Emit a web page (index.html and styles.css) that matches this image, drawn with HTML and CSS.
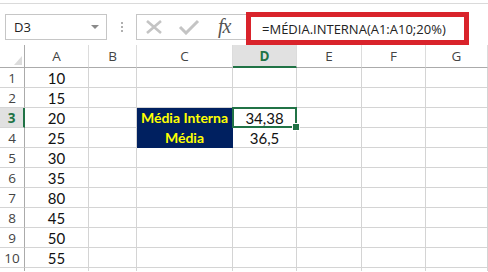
FILE: index.html
```html
<!DOCTYPE html>
<html lang="pt">
<head>
  <meta charset="UTF-8" />
  <title>MÉDIA.INTERNA</title>
  <link rel="stylesheet" href="styles.css">
</head>
<body>

<div class="toolbar">
  <div class="namebox">
    <span>D3</span>
    <span class="caret"></span>
  </div>
  <div class="dots"><i></i><i></i><i></i></div>
  <div class="fxbox">
    <svg class="ico" width="20" height="16" viewBox="0 0 20 16">
      <path d="M3 2 L17 14 M17 2 L3 14" stroke="#c4c4c4" stroke-width="2.6" fill="none"/>
    </svg>
    <svg class="ico" width="22" height="16" viewBox="0 0 22 16">
      <path d="M2 8 L8 14 L20 2" stroke="#c4c4c4" stroke-width="3" fill="none"/>
    </svg>
    <span class="fx">fx</span>
  </div>
  <div class="formula">
    <span>=MÉDIA.INTERNA(A1:A10;20%)</span>
  </div>
</div>

<div class="sheet">
  <div class="hd corner"><span class="tri"></span></div>
  <div class="hd">A</div>
  <div class="hd">B</div>
  <div class="hd">C</div>
  <div class="hd on">D</div>
  <div class="hd">E</div>
  <div class="hd">F</div>
  <div class="hd">G</div>

  <div class="rh">1</div><div class="c">10</div><div class="c"></div><div class="c"></div><div class="c"></div><div class="c"></div><div class="c"></div><div class="c"></div>
  <div class="rh">2</div><div class="c">15</div><div class="c"></div><div class="c"></div><div class="c"></div><div class="c"></div><div class="c"></div><div class="c"></div>
  <div class="rh on">3</div><div class="c">20</div><div class="c"></div><div class="c lbl">Média Interna</div><div class="c sel">34,38</div><div class="c"></div><div class="c"></div><div class="c"></div>
  <div class="rh">4</div><div class="c">25</div><div class="c"></div><div class="c lbl">Média</div><div class="c">36,5</div><div class="c"></div><div class="c"></div><div class="c"></div>
  <div class="rh">5</div><div class="c">30</div><div class="c"></div><div class="c"></div><div class="c"></div><div class="c"></div><div class="c"></div><div class="c"></div>
  <div class="rh">6</div><div class="c">35</div><div class="c"></div><div class="c"></div><div class="c"></div><div class="c"></div><div class="c"></div><div class="c"></div>
  <div class="rh">7</div><div class="c">80</div><div class="c"></div><div class="c"></div><div class="c"></div><div class="c"></div><div class="c"></div><div class="c"></div>
  <div class="rh">8</div><div class="c">45</div><div class="c"></div><div class="c"></div><div class="c"></div><div class="c"></div><div class="c"></div><div class="c"></div>
  <div class="rh">9</div><div class="c">50</div><div class="c"></div><div class="c"></div><div class="c"></div><div class="c"></div><div class="c"></div><div class="c"></div>
  <div class="rh">10</div><div class="c">55</div><div class="c"></div><div class="c"></div><div class="c"></div><div class="c"></div><div class="c"></div><div class="c"></div>
  <div class="rh end"></div><div class="c end"></div><div class="c end"></div><div class="c end"></div><div class="c end"></div><div class="c end"></div><div class="c end"></div><div class="c end"></div>
</div>

</body>
</html>
```

FILE: styles.css
```css
* { box-sizing: border-box; margin: 0; padding: 0; }

body {
  width: 488px;
  height: 272px;
  overflow: hidden;
  background: #fff;
  font-family: 'Open Sans', 'Noto Sans', sans-serif;
  color: #333;
}

/* Formula bar */
.toolbar {
  margin-top: 3px;
  border-top: 1px solid #dadada;
  height: 42px;
  display: flex;
  align-items: flex-start;
  padding-top: 10px;
}

.namebox {
  margin-left: 5px;
  width: 102px;
  height: 26px;
  border: 1px solid #c6c6c6;
  display: flex;
  align-items: center;
  justify-content: space-between;
  padding: 0 7px 0 8px;
  font-size: 13px;
  color: #222;
}

.caret {
  width: 0;
  height: 0;
  border-left: 4px solid transparent;
  border-right: 4px solid transparent;
  border-top: 4px solid #8a8a8a;
}

.dots {
  width: 3px;
  margin: 8px 12px 0 14px;
  display: flex;
  flex-direction: column;
  gap: 2px;
}
.dots i {
  width: 2px;
  height: 2px;
  background: #b0b0b0;
}

.fxbox {
  width: 110px;
  height: 26px;
  border: 1px solid #c6c6c6;
  border-right: none;
  display: flex;
  align-items: center;
  padding-left: 7px;
}
.ico { margin-right: 14px; }
.ico + .ico { margin-right: 18px; }

.fx {
  font-family: 'Liberation Serif', serif;
  font-style: italic;
  font-size: 20px;
  color: #555;
  letter-spacing: -1px;
  margin-top: -2px;
}

.formula {
  margin-top: -2px;
  width: 223px;
  height: 33px;
  border: 5px solid #d9232b;
  display: flex;
  align-items: center;
  padding-left: 11px;
  font-size: 13px;
  color: #222;
}

/* Sheet grid */
.sheet {
  display: grid;
  grid-template-columns: 25px 64px 48px 96px 64px 65px 64px 62px;
  grid-template-rows: 23px repeat(10, 20px) 3px;
}

.hd {
  border-right: 1px solid #dcdcdc;
  border-bottom: 1px solid #ababab;
  display: flex;
  align-items: center;
  justify-content: center;
  font-size: 13.5px;
  color: #444;
}
.hd.on {
  background: #e1e1e1;
  border-bottom: 2px solid #217346;
  color: #217346;
  font-weight: 700;
}

.corner {
  border-right: 1px solid #ababab;
  position: relative;
}
.tri {
  position: absolute;
  right: 2px;
  bottom: 2px;
  width: 0;
  height: 0;
  border-left: 8px solid transparent;
  border-bottom: 9px solid #dcdcdc;
}

.rh {
  border-right: 1px solid #ababab;
  border-bottom: 1px solid #d4d4d4;
  display: flex;
  align-items: center;
  justify-content: center;
  font-size: 13.5px;
  color: #444;
}
.rh.on {
  background: #e1e1e1;
  border-right: 2px solid #217346;
  color: #217346;
  font-weight: 700;
}

.c {
  border-right: 1px solid #d4d4d4;
  border-bottom: 1px solid #d4d4d4;
  display: flex;
  align-items: center;
  justify-content: center;
  font-family: 'Lato', sans-serif;
  font-size: 15px;
  color: #111;
}

.end { border-bottom: none; }

.lbl {
  background: #002060;
  border-color: #002060;
  color: #ffff00;
  font-weight: 700;
  font-size: 14px;
}

.sel { position: relative; }
.sel::after {
  content: '';
  position: absolute;
  left: -1px;
  top: -1px;
  right: -1px;
  bottom: -1px;
  border: 2px solid #217346;
}
.sel::before {
  content: '';
  position: absolute;
  right: -4px;
  bottom: -4px;
  width: 6px;
  height: 6px;
  background: #217346;
  border: 1px solid #fff;
  z-index: 1;
}
```
